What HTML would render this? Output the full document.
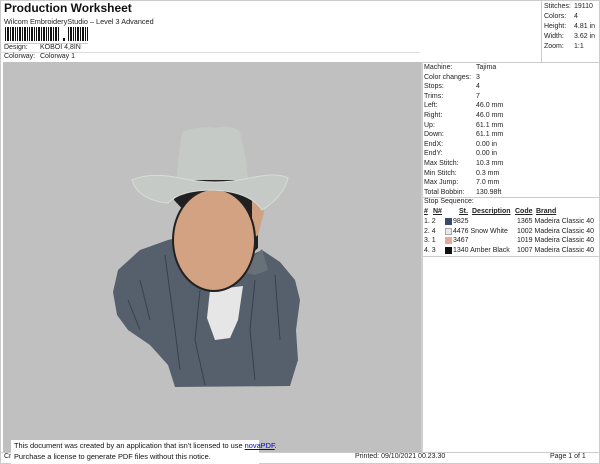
<!DOCTYPE html>
<html><head><meta charset="utf-8"><style>
*{margin:0;padding:0;box-sizing:border-box}
body{width:600px;height:464px;background:#fff;font-family:"Liberation Sans",sans-serif;color:#222;position:relative;overflow:hidden;font-size:7px}
.a{position:absolute;white-space:nowrap}
#bar span{display:inline-block;height:14px;background:#111;margin-right:1px;vertical-align:top}
</style></head><body>
<div class="a" style="left:0;top:0;width:600px;height:464px;border:1px solid #ccc"></div>
<div class="a" style="left:4px;top:1px;font-size:12px;font-weight:bold;color:#111">Production Worksheet</div>
<div class="a" style="left:4px;top:17px;font-size:7.3px">Wilcom EmbroideryStudio – Level 3 Advanced</div>
<div class="a" id="bar" style="left:5px;top:27px;height:15px;width:100px">
<span style="width:1px"></span><span style="width:2px"></span><span style="width:1px"></span><span style="width:2px"></span><span style="width:1px"></span><span style="width:1px"></span><span style="width:2px"></span><span style="width:1px"></span><span style="width:2px"></span><span style="width:1px"></span><span style="width:1px"></span><span style="width:2px"></span><span style="width:1px"></span><span style="width:1px"></span><span style="width:2px"></span><span style="width:1px"></span><span style="width:2px"></span><span style="width:1px"></span><span style="width:1px"></span><span style="width:2px"></span><span style="width:1px"></span><span style="width:2px"></span><span style="width:1px;margin-right:4px"></span><span style="width:2px;height:3px;margin-top:11px;margin-right:3px"></span><span style="width:1px"></span><span style="width:2px"></span><span style="width:1px"></span><span style="width:1px"></span><span style="width:2px"></span><span style="width:1px"></span><span style="width:2px"></span><span style="width:1px"></span><span style="width:1px"></span></div>
<div class="a" style="left:5px;top:43px;width:83px;height:1px;background:#ccc"></div>
<div class="a" style="left:4px;top:44px">Design:</div><div class="a" style="left:40px;top:44px">KOBOI 4,8IN</div>
<div class="a" style="left:0;top:52px;width:420px;height:1px;background:#ddd"></div>
<div class="a" style="left:4px;top:53px">Colorway:</div><div class="a" style="left:40px;top:53px">Colorway 1</div>
<div class="a" style="left:541px;top:0;width:1px;height:62px;background:#ccc"></div>
<div class="a" style="left:544px;top:2px;line-height:10px">Stitches:<br>Colors:<br>Height:<br>Width:<br>Zoom:</div>
<div class="a" style="left:574px;top:2px;line-height:10px">19110<br>4<br>4.81 in<br>3.62 in<br>1:1</div>
<div class="a" style="left:3px;top:62px;width:420px;height:390px;background:#c0c0c0"></div>
<div class="a" style="left:421px;top:62px;width:2px;height:390px;background:#cfcfcf"></div>
<div class="a" style="left:423px;top:62px;width:176px;height:1px;background:#ccc"></div>
<div class="a" style="left:424px;top:63px;line-height:9.6px">Machine:<br>Color changes:<br>Stops:<br>Trims:<br>Left:<br>Right:<br>Up:<br>Down:<br>EndX:<br>EndY:<br>Max Stitch:<br>Min Stitch:<br>Max Jump:<br>Total Bobbin:</div>
<div class="a" style="left:476px;top:63px;line-height:9.6px">Tajima<br>3<br>4<br>7<br>46.0 mm<br>46.0 mm<br>61.1 mm<br>61.1 mm<br>0.00 in<br>0.00 in<br>10.3 mm<br>0.3 mm<br>7.0 mm<br>130.98ft</div>
<div class="a" style="left:423px;top:197px;width:176px;height:1px;background:#ccc"></div>
<div class="a" style="left:424px;top:198px">Stop Sequence:</div>
<div class="a" style="left:424px;top:208px;font-weight:bold;text-decoration:underline">#</div>
<div class="a" style="left:433px;top:208px;font-weight:bold;text-decoration:underline">N#</div>
<div class="a" style="left:459px;top:208px;font-weight:bold;text-decoration:underline">St.</div>
<div class="a" style="left:472px;top:208px;font-weight:bold;text-decoration:underline">Description</div>
<div class="a" style="left:515px;top:208px;font-weight:bold;text-decoration:underline">Code</div>
<div class="a" style="left:536px;top:208px;font-weight:bold;text-decoration:underline">Brand</div>
<div class="a" style="left:424px;top:217px;line-height:9.6px">1. 2<br>2. 4<br>3. 1<br>4. 3</div>
<div class="a" style="left:445px;top:218px;width:7px;height:7px;background:#3c4a6a"></div>
<div class="a" style="left:445px;top:228px;width:7px;height:7px;background:#e8e8f2;border:1px solid #aaa"></div>
<div class="a" style="left:445px;top:237px;width:7px;height:7px;background:#e8a898"></div>
<div class="a" style="left:445px;top:247px;width:7px;height:7px;background:#111"></div>
<div class="a" style="left:453px;top:217px;line-height:9.6px">9825<br>4476 Snow White<br>3467<br>1340 Amber Black</div>
<div class="a" style="left:517px;top:217px;line-height:9.6px">1365 Madeira Classic 40<br>1002 Madeira Classic 40<br>1019 Madeira Classic 40<br>1007 Madeira Classic 40</div>
<div class="a" style="left:423px;top:256px;width:176px;height:1px;background:#ccc"></div>
<svg class="a" style="left:0;top:0" width="600" height="464">
<path d="M118 270 L140 250 L168 240 L185 236 L215 290 L245 258 L262 250 L280 262 L295 280 L300 300 L296 330 L298 360 L290 386 L175 387 L168 365 L150 345 L128 330 L117 315 L113 292Z" fill="#56606c"/>
<path d="M186 236 L195 258 L212 268 L225 272 L248 262 L262 249 L268 270 L255 275 L225 268 L200 275Z" fill="#687078"/>
<path d="M210 290 L243 286 L238 320 L230 338 L215 340 L207 318Z" fill="#e6e6e6"/>
<path d="M140 280 L150 320 M165 255 L175 330 L180 370 M200 290 L195 340 L205 385 M255 280 L250 330 L255 380 M275 275 L280 340 M128 300 L140 330" stroke="#3a4048" stroke-width="1" fill="none"/>
<path d="M174 200 L178 180 L250 180 L258 200 L258 248 L245 260 L232 262 Z" fill="#202020"/>
<path d="M252 200 L262 196 L264 212 L258 235 L252 240Z" fill="#d0a080"/>
<ellipse cx="214" cy="240" rx="41" ry="51" fill="#d2a282" stroke="#222" stroke-width="2"/>
<path d="M182 132 Q200 125 215 128 Q232 124 240 132 L246 160 L248 180 L177 180 L178 160Z" fill="#c6cac6"/>
<path d="M132 180 Q150 172 180 178 Q215 186 250 178 Q278 172 288 178 Q284 196 262 210 Q250 192 214 190 Q180 190 168 203 Q138 200 132 180Z" fill="#c6cac6" stroke="#d8dcd8" stroke-width="1"/>
</svg>
<div class="a" style="left:0;top:452px;width:600px;height:1px;background:#ccc"></div>
<div class="a" style="left:4px;top:453px">Cr</div>
<div class="a" style="left:355px;top:453px">Printed: 09/10/2021 00.23.30</div>
<div class="a" style="left:550px;top:453px">Page 1 of 1</div>
<div class="a" style="left:11px;top:440px;width:248px;height:24px;background:#fff"></div>
<div class="a" style="left:14px;top:441px;font-size:7.4px;line-height:10.5px;color:#111">This document was created by an application that isn't licensed to use <span style="color:#00c;text-decoration:underline">novaPDF</span>.<br>Purchase a license to generate PDF files without this notice.</div>
</body></html>
